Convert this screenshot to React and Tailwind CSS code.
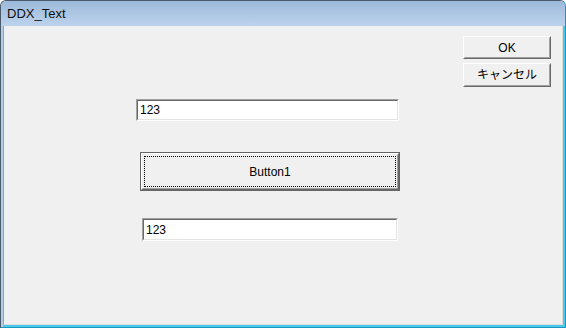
import React from "react";

const uiFont = { fontFamily: '"Liberation Sans", "Noto Sans CJK JP", sans-serif' };

function Edit({ className = "" }) {
  return (
    <div className={`border border-t-[#a0a0a0] border-l-[#a0a0a0] border-b-white border-r-white ${className}`}>
      <div className="h-full border border-t-[#696969] border-l-[#696969] border-b-[#e3e3e3] border-r-[#e3e3e3] bg-white flex items-center pl-[2px]">
        <span className="text-[12px] leading-none text-black" style={uiFont}>123</span>
      </div>
    </div>
  );
}

function PushButton({ children, className = "" }) {
  return (
    <div className={`border border-t-white border-l-white border-b-[#696969] border-r-[#696969] bg-[#f0f0f0] ${className}`}>
      <div className="h-full border border-t-[#f0f0f0] border-l-[#f0f0f0] border-b-[#a0a0a0] border-r-[#a0a0a0] flex items-center justify-center">
        <span className="text-[12px] leading-none text-black" style={uiFont}>{children}</span>
      </div>
    </div>
  );
}

export default function App() {
  return (
    <div className="w-[566px] h-[328px] flex flex-col rounded-t-[6px] border border-[#4a5a6a] border-r-[#1f98c0] border-b-[#1f98c0] bg-[#b4cde8] overflow-hidden">
      <div className="h-[25px] shrink-0 flex items-center pl-[6px] bg-gradient-to-b from-[#9db9da] to-[#bcd3ec]">
        <span className="text-[13px] text-[#101010]" style={uiFont}>DDX_Text</span>
      </div>
      <div className="flex-1 ml-[2px] border-r-[2px] border-r-[#48c8ec] border-b-[2px] border-b-[#48c8ec]">
        <div className="h-full bg-[#f0f0f0] border-r border-b border-[#dcdcdc] border-l border-l-[#8aa4c0] flex flex-col pt-[10px]">
          <div className="flex justify-end pr-[11px]">
            <div className="flex flex-col gap-[4px]">
              <PushButton className="w-[88px] h-[23px]">OK</PushButton>
              <PushButton className="w-[88px] h-[24px]">キャンセル</PushButton>
            </div>
          </div>
          <Edit className="mt-[12px] ml-[132px] w-[263px] h-[22px]" />
          <div className="mt-[31px] ml-[136px] w-[260px] h-[39px] border border-[#646464] bg-[#f0f0f0]">
            <div className="h-full border border-t-white border-l-white border-b-[#696969] border-r-[#696969]">
              <div className="h-full border border-t-[#f0f0f0] border-l-[#f0f0f0] border-b-[#a0a0a0] border-r-[#a0a0a0] p-[1px]">
                <div className="h-full border border-dotted border-black flex items-center justify-center">
                  <span className="text-[12px] leading-none text-black" style={uiFont}>Button1</span>
                </div>
              </div>
            </div>
          </div>
          <Edit className="mt-[27px] ml-[138px] w-[256px] h-[23px]" />
        </div>
      </div>
    </div>
  );
}
